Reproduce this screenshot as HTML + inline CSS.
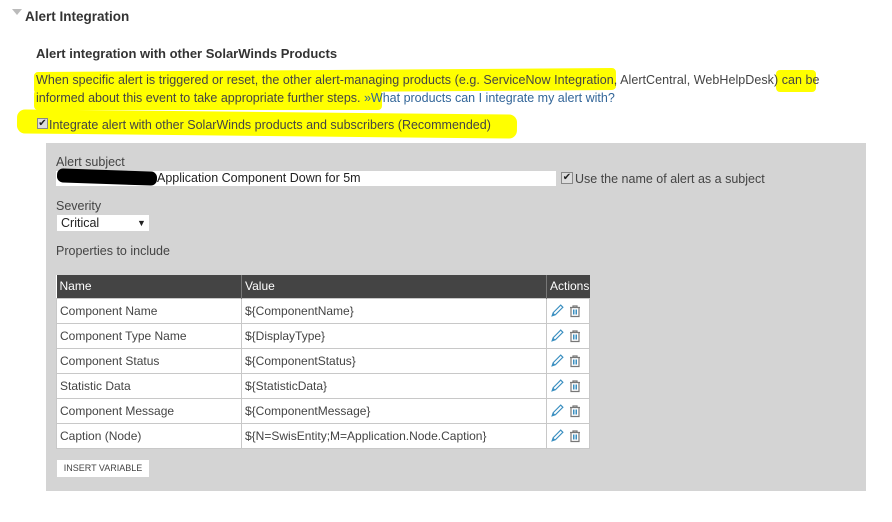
<!DOCTYPE html>
<html><head><meta charset="utf-8"><style>
*{margin:0;padding:0;box-sizing:border-box}
body{width:892px;height:522px;background:#fff;font-family:"Liberation Sans",sans-serif;color:#333;position:relative;overflow:hidden;font-size:12.5px}
.a{position:absolute;white-space:nowrap}
.hl{position:absolute;background:#ffff00;border-radius:4px}
table{border-collapse:collapse;position:absolute;left:56px;top:275px;width:533px;background:#fff;table-layout:fixed}
th{background:#444;color:#fff;font-weight:normal;text-align:left;height:23px;padding:0 3px;font-size:12px;border-right:1px solid #777}
td{height:25px;border:1px solid #c8c8c8;padding:0 3px;font-size:12px;color:#444;white-space:nowrap}
.ic{display:inline-block;vertical-align:middle}
</style></head><body>
<div class="a" style="left:12px;top:9px;width:0;height:0;border-left:5px solid transparent;border-right:5px solid transparent;border-top:6px solid #bbb"></div>
<div class="a" style="left:25px;top:9px;font-size:13.5px;font-weight:bold;color:#333">Alert Integration</div>
<div class="a" style="left:36px;top:46px;font-size:13px;font-weight:bold;color:#333">Alert integration with other SolarWinds Products</div>

<div class="hl" style="left:34px;top:70px;width:582px;height:22px;transform:rotate(-0.4deg)"></div>
<div class="hl" style="left:776px;top:70px;width:40px;height:22px"></div>
<div class="hl" style="left:34px;top:90px;width:348px;height:20px"></div>
<div class="hl" style="left:17px;top:112px;width:500px;height:24px;transform:rotate(0.6deg);border-radius:8px"></div>

<div class="a" style="left:36px;top:73px;font-size:12.5px;color:#444;letter-spacing:0.05px">When specific alert is triggered or reset, the other alert-managing products (e.g. ServiceNow Integration, AlertCentral, WebHelpDesk) can be</div>
<div class="a" style="left:36px;top:91px;font-size:12.5px;color:#444">informed about this event to take appropriate further steps. <span style="color:#336699">»What products can I integrate my alert with?</span></div>
<div class="a" style="left:37px;top:118px;width:11px;height:11px;border:1px solid #888;background:#ddd;font-size:10px;line-height:9px;text-align:center;color:#222">✔</div>
<div class="a" style="left:49px;top:118px;font-size:12.5px;color:#444">Integrate alert with other SolarWinds products and subscribers (Recommended)</div>

<div class="a" style="left:46px;top:143px;width:820px;height:348px;background:#d4d4d4"></div>
<div class="a" style="left:56px;top:155px;color:#444">Alert subject</div>
<div class="a" style="left:56px;top:171px;width:500px;height:15px;background:#fff"></div>
<div class="a" style="left:57px;top:170px;width:100px;height:14px;background:#000;border-radius:6px;transform:rotate(2deg)"></div>
<div class="a" style="left:157px;top:171px;font-size:12.5px;color:#222;line-height:15px">Application Component Down for 5m</div>
<div class="a" style="left:561px;top:172px;width:12px;height:12px;border:1px solid #888;background:#ddd;font-size:10px;line-height:10px;text-align:center;color:#222">✔</div>
<div class="a" style="left:575px;top:172px;color:#444">Use the name of alert as a subject</div>
<div class="a" style="left:56px;top:199px;color:#444">Severity</div>
<div class="a" style="left:57px;top:215px;width:92px;height:16px;background:#fff;font-size:12.5px;color:#222;padding-left:4px;line-height:16px">Critical<span style="position:absolute;left:80px;font-size:9px">▼</span></div>
<div class="a" style="left:56px;top:244px;color:#444">Properties to include</div>

<table>
<colgroup><col style="width:185px"><col style="width:305px"><col style="width:43px"></colgroup>
<tr><th>Name</th><th>Value</th><th style="border-right:none">Actions</th></tr>
<tr><td>Component Name</td><td>${ComponentName}</td><td class="act"></td></tr>
<tr><td>Component Type Name</td><td>${DisplayType}</td><td class="act"></td></tr>
<tr><td>Component Status</td><td>${ComponentStatus}</td><td class="act"></td></tr>
<tr><td>Statistic Data</td><td>${StatisticData}</td><td class="act"></td></tr>
<tr><td>Component Message</td><td>${ComponentMessage}</td><td class="act"></td></tr>
<tr><td>Caption (Node)</td><td>${N=SwisEntity;M=Application.Node.Caption}</td><td class="act"></td></tr>
</table>
<div class="a" style="left:57px;top:460px;width:92px;height:17px;background:#fff;font-size:9px;color:#444;text-align:center;line-height:17px">INSERT VARIABLE</div>
<script>
document.querySelectorAll('td.act').forEach(function(td){
td.innerHTML='<svg class="ic" width="15" height="15" viewBox="0 0 14 14"><path d="M2 12 L3 9 L10 2 L12 4 L5 11 Z" fill="none" stroke="#3b8fc0" stroke-width="1.1"/><path d="M2 12 L3 9 L5 11Z" fill="#3b8fc0"/></svg><svg class="ic" style="margin-left:4px" width="12" height="14" viewBox="0 0 12 13"><path d="M1 3H11M4 3V1.5H8V3M2 3V12H10V3" fill="none" stroke="#777" stroke-width="1.2"/><path d="M4.5 5V10M6 5V10M7.5 5V10" stroke="#3b8fc0" stroke-width="1"/></svg>';
});
</script>
</body></html>
